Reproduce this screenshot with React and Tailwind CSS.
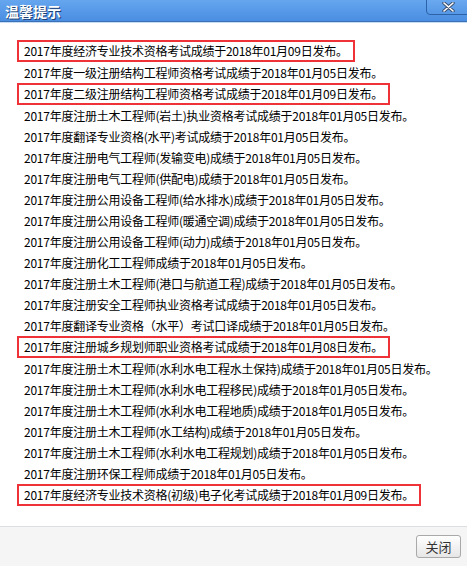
import React from 'react';

const ITEMS = [
  { text: '2017年度经济专业技术资格考试成绩于2018年01月09日发布。', hot: true },
  { text: '2017年度一级注册结构工程师资格考试成绩于2018年01月05日发布。' },
  { text: '2017年度二级注册结构工程师资格考试成绩于2018年01月09日发布。', hot: true },
  { text: '2017年度注册土木工程师(岩土)执业资格考试成绩于2018年01月05日发布。' },
  { text: '2017年度翻译专业资格(水平)考试成绩于2018年01月05日发布。' },
  { text: '2017年度注册电气工程师(发输变电)成绩于2018年01月05日发布。' },
  { text: '2017年度注册电气工程师(供配电)成绩于2018年01月05日发布。' },
  { text: '2017年度注册公用设备工程师(给水排水)成绩于2018年01月05日发布。' },
  { text: '2017年度注册公用设备工程师(暖通空调)成绩于2018年01月05日发布。' },
  { text: '2017年度注册公用设备工程师(动力)成绩于2018年01月05日发布。' },
  { text: '2017年度注册化工工程师成绩于2018年01月05日发布。' },
  { text: '2017年度注册土木工程师(港口与航道工程)成绩于2018年01月05日发布。' },
  { text: '2017年度注册安全工程师执业资格考试成绩于2018年01月05日发布。' },
  { text: '2017年度翻译专业资格（水平）考试口译成绩于2018年01月05日发布。' },
  { text: '2017年度注册城乡规划师职业资格考试成绩于2018年01月08日发布。', hot: true },
  { text: '2017年度注册土木工程师(水利水电工程水土保持)成绩于2018年01月05日发布。' },
  { text: '2017年度注册土木工程师(水利水电工程移民)成绩于2018年01月05日发布。' },
  { text: '2017年度注册土木工程师(水利水电工程地质)成绩于2018年01月05日发布。' },
  { text: '2017年度注册土木工程师(水工结构)成绩于2018年01月05日发布。' },
  { text: '2017年度注册土木工程师(水利水电工程规划)成绩于2018年01月05日发布。' },
  { text: '2017年度注册环保工程师成绩于2018年01月05日发布。' },
  { text: '2017年度经济专业技术资格(初级)电子化考试成绩于2018年01月09日发布。', hot: true },
];

export default function App() {
  return (
    <div
      className="flex flex-col w-[467px] h-[566px] bg-white overflow-hidden"
      style={{ fontFamily: '"Noto Sans CJK SC", sans-serif' }}
    >
      {/* Title bar */}
      <div className="relative h-[22px] shrink-0 bg-gradient-to-b from-[#66a6ef] to-[#4a8ee2] border-b border-[#3a70b6]">
        <span className="absolute left-[5px] top-[1px] text-[14px] leading-[20px] font-bold text-white [text-shadow:1px_1px_0_#1c3f73]">
          温馨提示
        </span>
        <button className="absolute right-[-4px] top-[-1px] w-[45px] h-[16px] flex items-center justify-center rounded-bl-[4px] border border-[#2c63a8] bg-gradient-to-b from-[#6aa9f0] to-[#5597e6]">
          <svg width="13" height="10" viewBox="0 0 13 10">
            <path d="M2 1 L11 9 M11 1 L2 9" stroke="#3a4d6a" strokeWidth="3.4" strokeLinecap="round" />
            <path d="M2 1 L11 9 M11 1 L2 9" stroke="#ffffff" strokeWidth="1.6" strokeLinecap="round" />
          </svg>
        </button>
      </div>
      <div className="h-px shrink-0 bg-[#c8dcf3]" />

      {/* Notice list */}
      <div className="flex-1 pt-[17px] pl-[17px]">
        {ITEMS.map((item, i) => (
          <div
            key={i}
            className={
              'w-fit px-[5px] border-2 text-[12px] tracking-[-0.25px] text-black whitespace-nowrap ' +
              (item.hot ? 'h-[22px] leading-[18px] border-[#ee3237]' : 'h-[21px] leading-[17px] border-transparent')
            }
          >
            {item.text}
          </div>
        ))}
      </div>

      {/* Footer */}
      <div className="h-[40px] shrink-0 border-t border-[#dcdee2] bg-[#f5f5f5] flex items-start justify-end pt-[8px] pr-[6px]">
        <button className="w-[45px] h-[23px] rounded-[3px] border border-[#a9a9a9] bg-gradient-to-b from-white to-[#e6e6e6] text-[13px] leading-[21px] text-[#333]">
          关闭
        </button>
      </div>
    </div>
  );
}
